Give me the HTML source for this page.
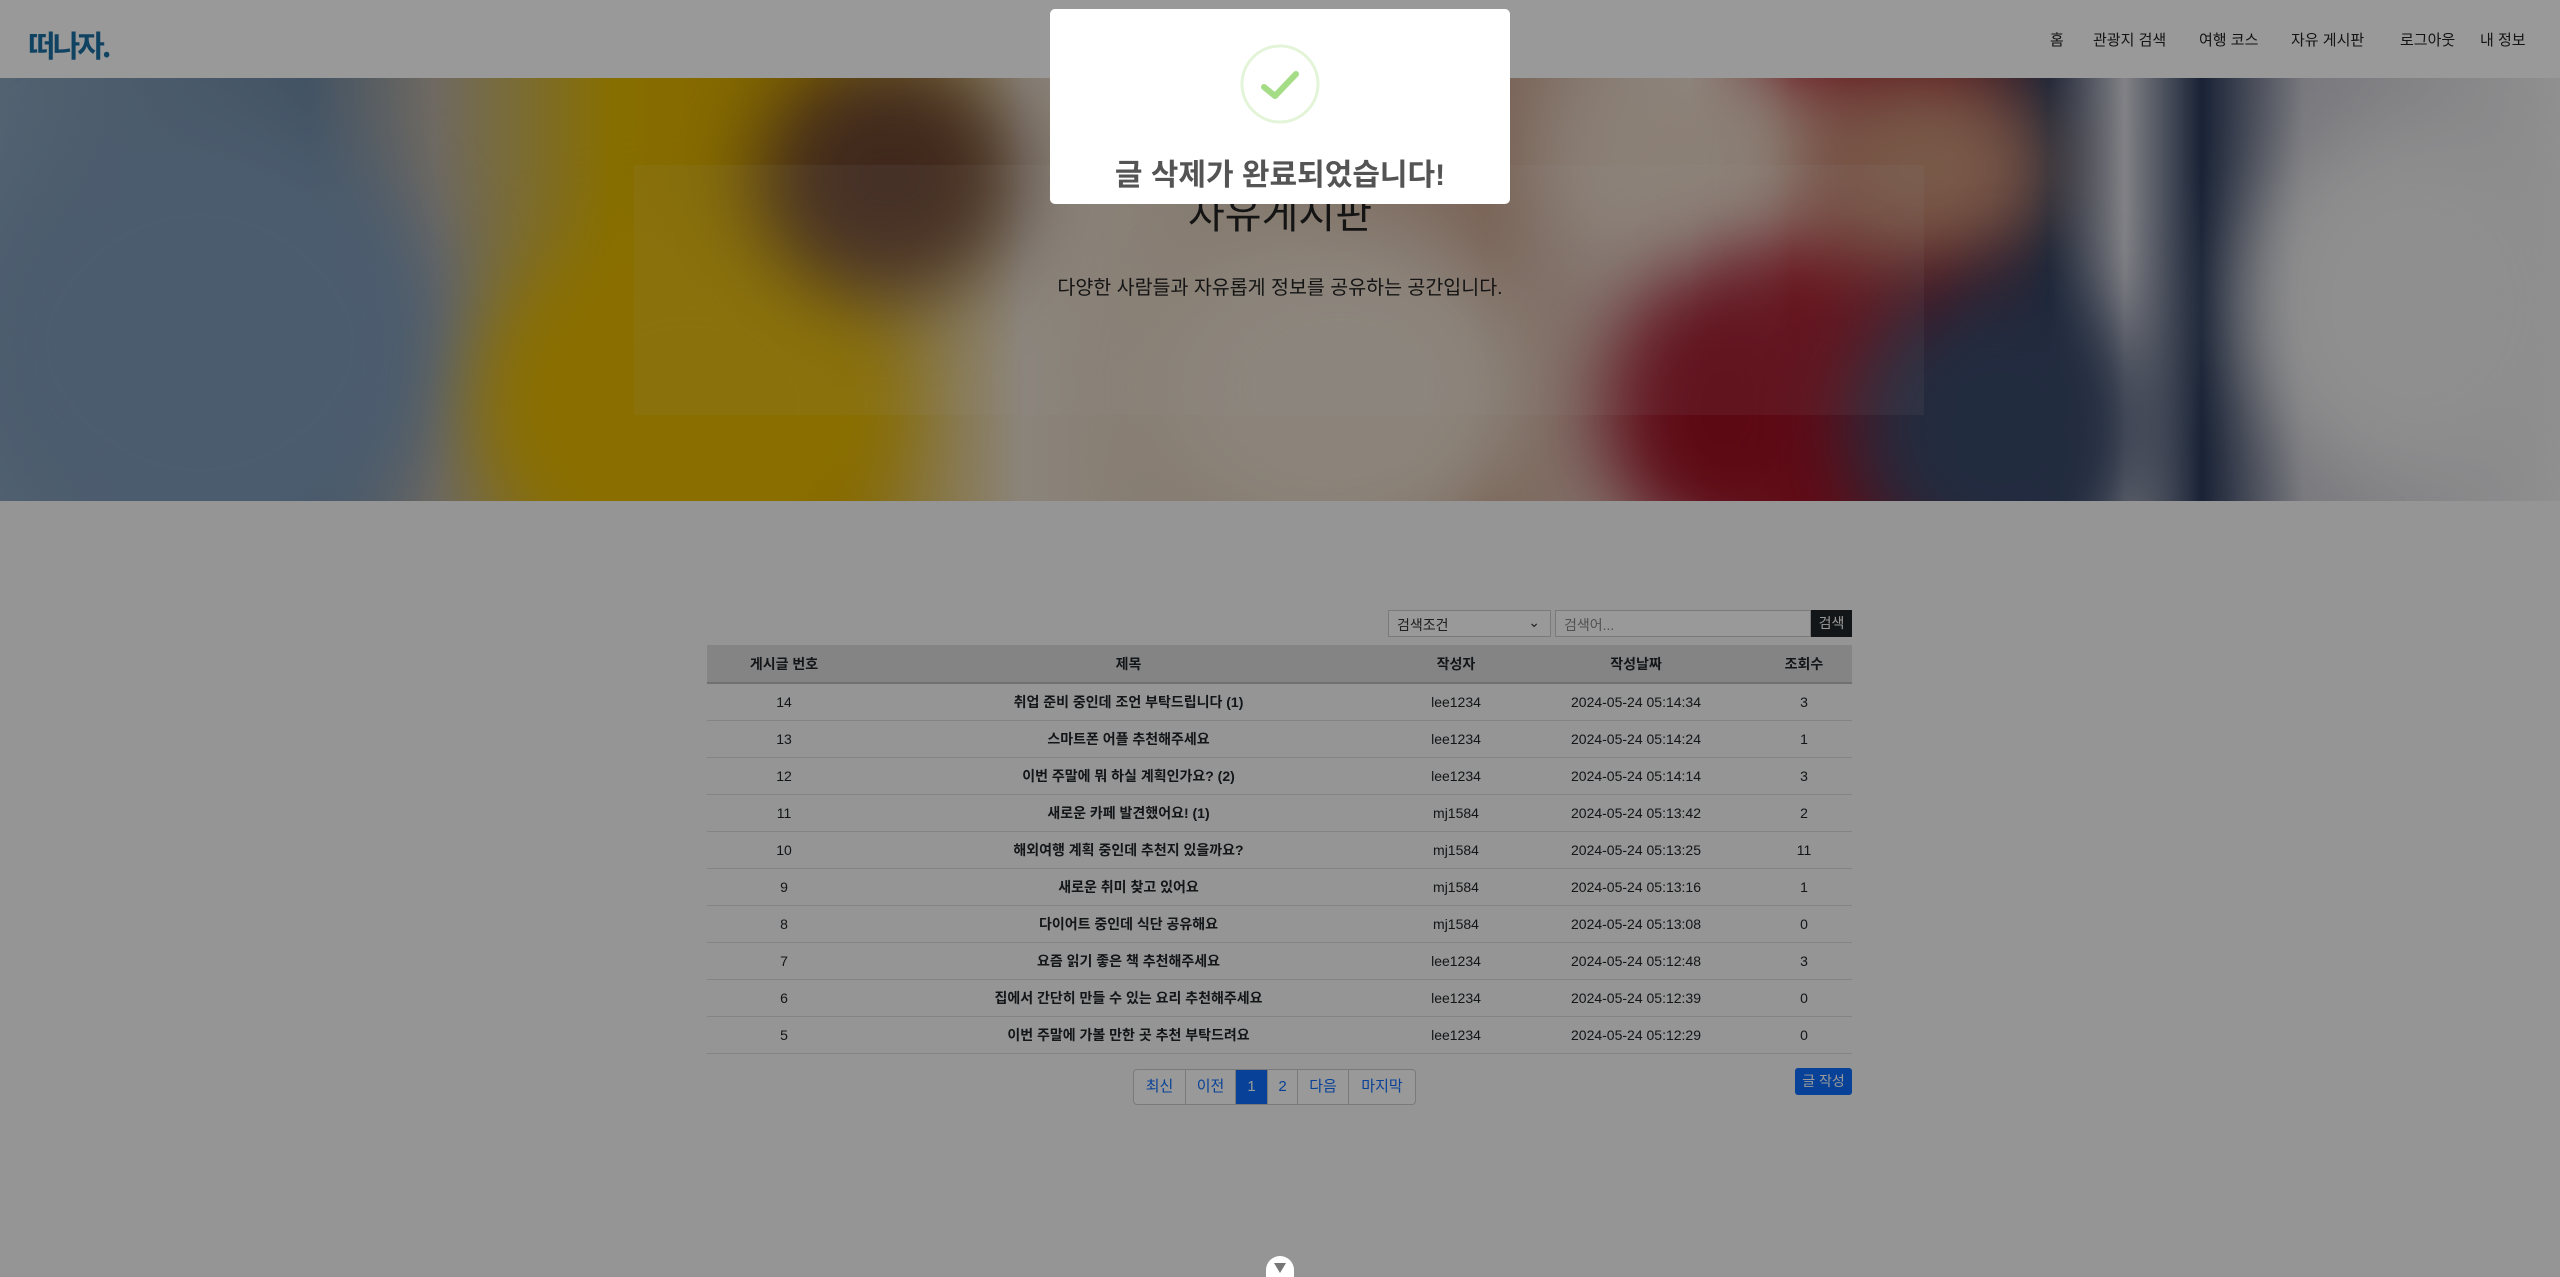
<!DOCTYPE html>
<html style="overflow:hidden"><head><meta charset="utf-8"><style>
*{box-sizing:border-box;margin:0;padding:0}
html,body{overflow:hidden}
body{width:2560px;height:1277px;overflow:hidden;background:#f8f8f8;font-family:"Liberation Sans","Noto Sans CJK KR",sans-serif;position:relative;color:#212529}
.hdr{position:absolute;left:0;top:0;width:2560px;height:78px;background:#fff}
.logo{position:absolute;left:28px;top:22px;font-size:30px;font-weight:bold;color:#1c6ea4;letter-spacing:-3px;font-family:"Noto Sans CJK KR",sans-serif}
.nav{position:absolute;top:29px;font-size:15px;color:#222}
.hero{position:absolute;left:0;top:78px;width:2560px;height:423px;overflow:hidden;
background:linear-gradient(90deg,#8aa4bd 0%,#6f8aa6 12%,#b9b0a3 17%,#e2b800 24%,#d9a800 32%,#e8dccd 40%,#d9c3ad 50%,#c9a08a 58%,#efe9e2 66%,#b01828 70%,#8a1020 76%,#2a3a5a 80%,#d8d8e0 83%,#2a3a5a 86%,#c9c9d2 90%,#f0f0f0 100%)}
.blob{position:absolute;border-radius:50%;filter:blur(40px)}
.hbox{position:absolute;left:634px;top:87px;width:1290px;height:250px;background:rgba(255,255,255,.08)}
.htitle{position:absolute;left:0;width:2560px;top:182px;text-align:center;font-size:40px;color:#222}
.hsub{position:absolute;left:0;width:2560px;top:271px;text-align:center;font-size:19.5px;color:#222}
.sel{position:absolute;left:1388px;top:610px;width:163px;height:27px;border:1px solid #ccc;background:#fff;font-size:14px;padding:4px 8px;color:#333}
.inp{position:absolute;left:1555px;top:610px;width:256px;height:27px;border:1px solid #ccc;background:#fff;font-size:14px;padding:4px 8px;color:#888}
.sbtn{position:absolute;left:1811px;top:610px;width:41px;height:27px;background:#212529;color:#fff;font-size:14px;text-align:center;line-height:27px}
table{position:absolute;left:707px;top:645px;width:1145px;border-collapse:collapse;font-size:14px}
th{background:#dcdcdc;height:38px;font-weight:bold;border-bottom:2px solid #bbb}
td{height:37.1px;text-align:center;border-bottom:1px solid #ddd;background:#f8f8f8}
td.t{font-weight:bold}
.pg{position:absolute;top:1069px;left:1133px;height:36px;display:flex;border:1px solid #ccc;border-radius:4px;overflow:hidden;background:#fff}
.pg div{height:34px;line-height:34px;font-size:15px;color:#0d6efd;text-align:center;border-right:1px solid #ccc}
.wbtn{position:absolute;left:1795px;top:1068px;width:57px;height:27px;background:#0d6efd;color:#fff;font-size:14px;text-align:center;line-height:27px;border-radius:3px}
.ov{position:absolute;left:0;top:0;width:2560px;height:1277px;background:rgba(0,0,0,.4)}
.modal{position:absolute;left:1050px;top:9px;width:460px;height:195px;background:#fff;border-radius:5px}
.mt{position:absolute;left:0;width:460px;top:141px;text-align:center;font-size:30px;font-weight:bold;color:#545454}
.dn{position:absolute;left:1266px;top:1256px;width:28px;height:21px;background:#fff;border-radius:14px 14px 0 0;overflow:hidden}
</style></head><body>
<div class="hdr"><div class="logo">떠나자.</div>
<span class="nav" style="left:2050px">홈</span>
<span class="nav" style="left:2093px">관광지 검색</span>
<span class="nav" style="left:2199px">여행 코스</span>
<span class="nav" style="left:2291px">자유 게시판</span>
<span class="nav" style="left:2400px">로그아웃</span>
<span class="nav" style="left:2480px">내 정보</span>
</div>
<div class="hero">
<div class="blob" style="left:-50px;top:40px;width:500px;height:450px;background:#7e9ab8"></div>
<div class="blob" style="left:480px;top:150px;width:420px;height:350px;background:#e6b800"></div>
<div class="blob" style="left:760px;top:-20px;width:260px;height:240px;background:#6b4430"></div>
<div class="blob" style="left:1150px;top:150px;width:380px;height:320px;background:#e9dccc"></div>
<div class="blob" style="left:1550px;top:-20px;width:300px;height:200px;background:#e8d5c4"></div>
<div class="blob" style="left:1600px;top:180px;width:250px;height:300px;background:#9c1022"></div>
<div class="blob" style="left:1800px;top:-10px;width:250px;height:200px;background:#c9957a"></div>
<div class="blob" style="left:1850px;top:200px;width:300px;height:300px;background:#3a4a6a"></div>
<div class="blob" style="left:2250px;top:50px;width:320px;height:350px;background:#eeeeee"></div>
<div class="hbox"></div>
</div>
<div class="htitle">자유게시판</div>
<div class="hsub">다양한 사람들과 자유롭게 정보를 공유하는 공간입니다.</div>
<div class="sel">검색조건<span style="position:absolute;right:10px;top:3px">⌄</span></div>
<div class="inp">검색어...</div>
<div class="sbtn">검색</div>
<table>
<tr><th style="width:154px">게시글 번호</th><th style="width:535px">제목</th><th style="width:120px">작성자</th><th style="width:240px">작성날짜</th><th>조회수</th></tr>
<tr><td>14</td><td class="t">취업 준비 중인데 조언 부탁드립니다 (1)</td><td>lee1234</td><td>2024-05-24 05:14:34</td><td>3</td></tr>
<tr><td>13</td><td class="t">스마트폰 어플 추천해주세요</td><td>lee1234</td><td>2024-05-24 05:14:24</td><td>1</td></tr>
<tr><td>12</td><td class="t">이번 주말에 뭐 하실 계획인가요? (2)</td><td>lee1234</td><td>2024-05-24 05:14:14</td><td>3</td></tr>
<tr><td>11</td><td class="t">새로운 카페 발견했어요! (1)</td><td>mj1584</td><td>2024-05-24 05:13:42</td><td>2</td></tr>
<tr><td>10</td><td class="t">해외여행 계획 중인데 추천지 있을까요?</td><td>mj1584</td><td>2024-05-24 05:13:25</td><td>11</td></tr>
<tr><td>9</td><td class="t">새로운 취미 찾고 있어요</td><td>mj1584</td><td>2024-05-24 05:13:16</td><td>1</td></tr>
<tr><td>8</td><td class="t">다이어트 중인데 식단 공유해요</td><td>mj1584</td><td>2024-05-24 05:13:08</td><td>0</td></tr>
<tr><td>7</td><td class="t">요즘 읽기 좋은 책 추천해주세요</td><td>lee1234</td><td>2024-05-24 05:12:48</td><td>3</td></tr>
<tr><td>6</td><td class="t">집에서 간단히 만들 수 있는 요리 추천해주세요</td><td>lee1234</td><td>2024-05-24 05:12:39</td><td>0</td></tr>
<tr><td>5</td><td class="t">이번 주말에 가볼 만한 곳 추천 부탁드려요</td><td>lee1234</td><td>2024-05-24 05:12:29</td><td>0</td></tr>
</table>
<div class="pg"><div style="width:52px">최신</div><div style="width:50px">이전</div><div style="width:32px;background:#0d6efd;color:#fff">1</div><div style="width:30px">2</div><div style="width:51px">다음</div><div style="width:66px;border-right:0">마지막</div></div>
<div class="wbtn">글 작성</div>
<div class="ov"></div>
<div class="modal">
<svg style="position:absolute;left:190px;top:35px" width="80" height="80" viewBox="0 0 80 80"><circle cx="40" cy="40" r="38" fill="none" stroke="#e3f4d9" stroke-width="3"/><path d="M24 43 L35 52 L56 30" fill="none" stroke="#a5dc86" stroke-width="6" stroke-linecap="round" stroke-linejoin="round"/></svg>
<div class="mt">글 삭제가 완료되었습니다!</div>
</div>
<div class="dn"><svg style="position:absolute;left:7px;top:6px" width="14" height="12"><path d="M1 1 L13 1 L7 11 Z" fill="#777"/></svg></div>
</body></html>
